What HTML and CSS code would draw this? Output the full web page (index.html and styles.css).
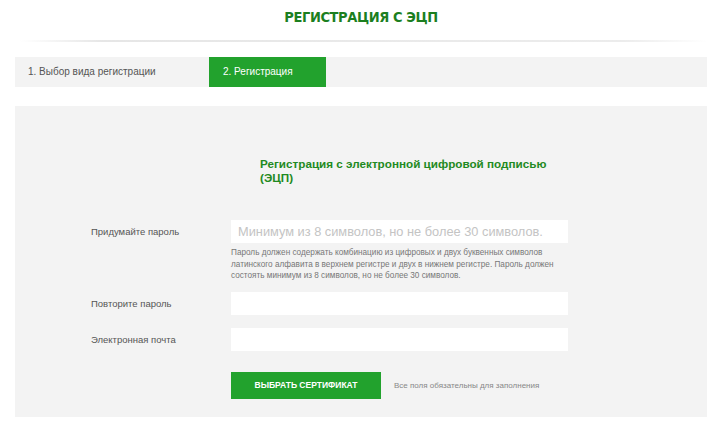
FILE: index.html
```html
<!DOCTYPE html>
<html lang="ru">
<head>
    <meta charset="UTF-8">
    <meta name="viewport" content="width=device-width, initial-scale=1.0">
    <title>Регистрация с ЭЦП</title>
    <link rel="stylesheet" href="styles.css">
</head>
<body>
    <div class="page">
        <h1 class="page-title">РЕГИСТРАЦИЯ С ЭЦП</h1>
        <div class="divider"></div>

        <div class="steps">
            <div class="step">1. Выбор вида регистрации</div>
            <div class="step active">2. Регистрация</div>
        </div>

        <div class="panel">
            <h2 class="panel-title">Регистрация с электронной цифровой подписью (ЭЦП)</h2>

            <form class="reg-form">
                <div class="form-row">
                    <label for="pass">Придумайте пароль</label>
                    <input type="password" id="pass" placeholder="Минимум из 8 символов, но не более 30 символов.">
                </div>
                <p class="hint">Пароль должен содержать комбинацию из цифровых и двух буквенных символов латинского алфавита в верхнем регистре и двух в нижнем регистре. Пароль должен состоять минимум из 8 символов, но не более 30 символов.</p>

                <div class="form-row">
                    <label for="pass2">Повторите пароль</label>
                    <input type="password" id="pass2">
                </div>

                <div class="form-row">
                    <label for="email">Электронная почта</label>
                    <input type="email" id="email">
                </div>

                <div class="form-actions">
                    <button type="button">ВЫБРАТЬ СЕРТИФИКАТ</button>
                    <span class="note">Все поля обязательны для заполнения</span>
                </div>
            </form>
        </div>
    </div>
</body>
</html>
```

FILE: styles.css
```css
body {
    margin: 0;
    background-color: #fff;
    font-family: "Liberation Sans", Arial, sans-serif;
    color: #555;
}
.page {
    width: 692px;
    margin-left: 15px;
}
.page-title {
    margin: 0;
    padding-top: 9px;
    height: 23px;
    text-align: center;
    font-family: "DejaVu Sans Condensed", "DejaVu Sans", sans-serif;
    font-weight: bold;
    font-size: 14.5px;
    letter-spacing: -0.4px;
    color: #1c7f1f;
}
.divider {
    height: 2px;
    margin: 8px 0 15px 5px;
    background: linear-gradient(to right, rgba(225,225,225,0), #e6e6e6 12%, #ececec 88%, rgba(225,225,225,0));
}
.steps {
    display: flex;
    height: 30px;
    background-color: #f3f3f3;
}
.step {
    width: 194px;
    padding-left: 13px;
    box-sizing: border-box;
    line-height: 30px;
    font-size: 10px;
    color: #555;
}
.step.active {
    width: 117px;
    padding-left: 14px;
    background-color: #22a22d;
    color: #fff;
}
.panel {
    margin-top: 19px;
    background-color: #f3f3f3;
    height: 311px;
    padding-top: 51px;
    box-sizing: border-box;
}
.panel-title {
    margin: 0 0 0 245px;
    width: 290px;
    font-size: 11.7px;
    line-height: 14px;
    font-weight: bold;
    color: #1f8a22;
}
.reg-form {
    margin-top: 35px;
    padding-left: 76px;
}
.form-row {
    display: flex;
    align-items: center;
    margin-bottom: 13px;
}
.form-row label {
    width: 140px;
    font-size: 9.5px;
    color: #555;
}
.form-row input {
    width: 337px;
    height: 23px;
    box-sizing: border-box;
    border: none;
    background-color: #fff;
    padding: 0 7px;
    font-family: "Liberation Sans", Arial, sans-serif;
    font-size: 12.8px;
}
.form-row input::placeholder {
    color: #c4c4c4;
}
.hint {
    margin: -9px 0 10px 140px;
    width: 330px;
    font-size: 8.2px;
    line-height: 11.5px;
    color: #777;
}
.form-actions {
    display: flex;
    align-items: center;
    margin-left: 140px;
    padding-top: 8px;
}
button {
    width: 150px;
    height: 27px;
    border: none;
    background-color: #22a22d;
    color: #fff;
    font-family: "Liberation Sans", Arial, sans-serif;
    font-weight: bold;
    font-size: 8.5px;
    cursor: pointer;
}
.note {
    margin-left: 13px;
    font-size: 8px;
    color: #888;
}
```
